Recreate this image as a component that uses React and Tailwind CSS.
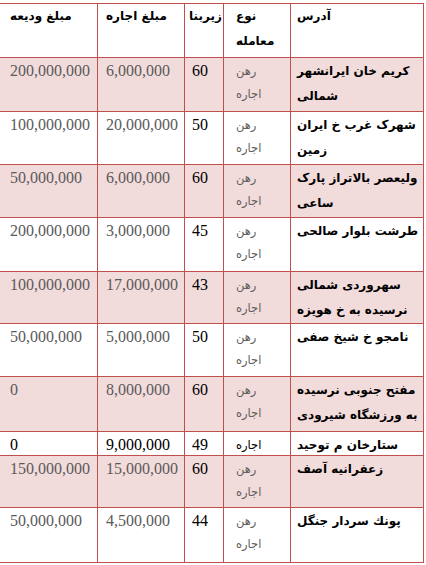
const rows = [
  { dep: '200,000,000', rent: '6,000,000', area: '60', type: ['رهن', 'اجاره'], addr: 'کریم خان ایرانشهر شمالی', h: 'h-[54px]', shade: true },
  { dep: '100,000,000', rent: '20,000,000', area: '50', type: ['رهن', 'اجاره'], addr: 'شهرک غرب خ ایران زمین', h: 'h-[53px]' },
  { dep: '50,000,000', rent: '6,000,000', area: '60', type: ['رهن', 'اجاره'], addr: 'ولیعصر بالاتراز پارک ساعی', h: 'h-[53px]', shade: true },
  { dep: '200,000,000', rent: '3,000,000', area: '45', type: ['رهن', 'اجاره'], addr: 'طرشت بلوار صالحی', h: 'h-[54px]' },
  { dep: '100,000,000', rent: '17,000,000', area: '43', type: ['رهن', 'اجاره'], addr: 'سهروردی شمالی نرسیده به خ هویزه', h: 'h-[52px]', shade: true },
  { dep: '50,000,000', rent: '5,000,000', area: '50', type: ['رهن', 'اجاره'], addr: 'نامجو خ شیخ صفی', h: 'h-[53px]' },
  { dep: '0', rent: '8,000,000', area: '60', type: ['رهن', 'اجاره'], addr: 'مفتح جنوبی نرسیده به ورزشگاه شیرودی', h: 'h-[55px]', shade: true },
  { dep: '0', rent: '9,000,000', area: '49', type: ['اجاره'], addr: 'ستارخان م توحید', h: 'h-[24px]', dark: true },
  { dep: '150,000,000', rent: '15,000,000', area: '60', type: ['رهن', 'اجاره'], addr: 'زعفرانیه آصف', h: 'h-[52px]', shade: true },
  { dep: '50,000,000', rent: '4,500,000', area: '44', type: ['رهن', 'اجاره'], addr: 'پونك سردار جنگل', h: 'h-[55px]' },
];

const cell = 'border-r border-b border-[#c0504d] overflow-hidden';
const num = "font-['Liberation_Serif',serif] text-[16px] leading-[18px] pt-[4px]";
const fa = "font-['DejaVu_Sans',sans-serif]";

export default function App() {
  return (
    <div className="w-[426px] h-[565px] bg-white">
      <div className="mt-[3px] w-[424px] border-t border-[#c0504d]">
        <div className={`grid grid-cols-[98px_87px_39px_67px_133px] h-[54px] ${fa} font-bold text-[12px] leading-[25px] text-black`}>
          <div className={`${cell} pl-[10px]`}><div dir="rtl" className="text-left">مبلغ ودیعه</div></div>
          <div className={`${cell} pl-[8px]`}><div dir="rtl" className="text-left">مبلغ اجاره</div></div>
          <div className={`${cell} pl-[4px]`}><div dir="rtl" className="text-left">زیربنا</div></div>
          <div className={`${cell} pl-[12px]`}>
            <div dir="rtl" className="text-left">نوع</div>
            <div dir="rtl" className="text-left">معامله</div>
          </div>
          <div className={`${cell} pl-[6px]`}><div dir="rtl" className="text-left">آدرس</div></div>
        </div>
        {rows.map((r, i) => (
          <div
            key={i}
            className={`grid grid-cols-[98px_87px_39px_67px_133px] ${r.h} ${r.shade ? 'bg-[#f2dbdb]' : 'bg-white'}`}
          >
            <div className={`${cell} ${num} pl-[10px] ${r.dark ? 'text-black' : 'text-[#5a5a5a]'}`}>{r.dep}</div>
            <div className={`${cell} ${num} pl-[8px] ${r.dark ? 'text-black' : 'text-[#5a5a5a]'}`}>{r.rent}</div>
            <div className={`${cell} ${num} pl-[7px] text-black`}>{r.area}</div>
            <div className={`${cell} ${fa} text-[11.5px] leading-[23px] pt-[2px] pl-[12px] ${r.dark ? 'text-black' : 'text-[#5f5f5f]'}`}>
              {r.type.map((t) => (
                <div key={t} dir="rtl" className="text-left">{t}</div>
              ))}
            </div>
            <div className={`${cell} ${fa} font-bold text-[12px] leading-[25px] pt-[1px] pl-[6px] text-black`}>
              <div dir="rtl" className="text-left">{r.addr}</div>
            </div>
          </div>
        ))}
      </div>
    </div>
  );
}
